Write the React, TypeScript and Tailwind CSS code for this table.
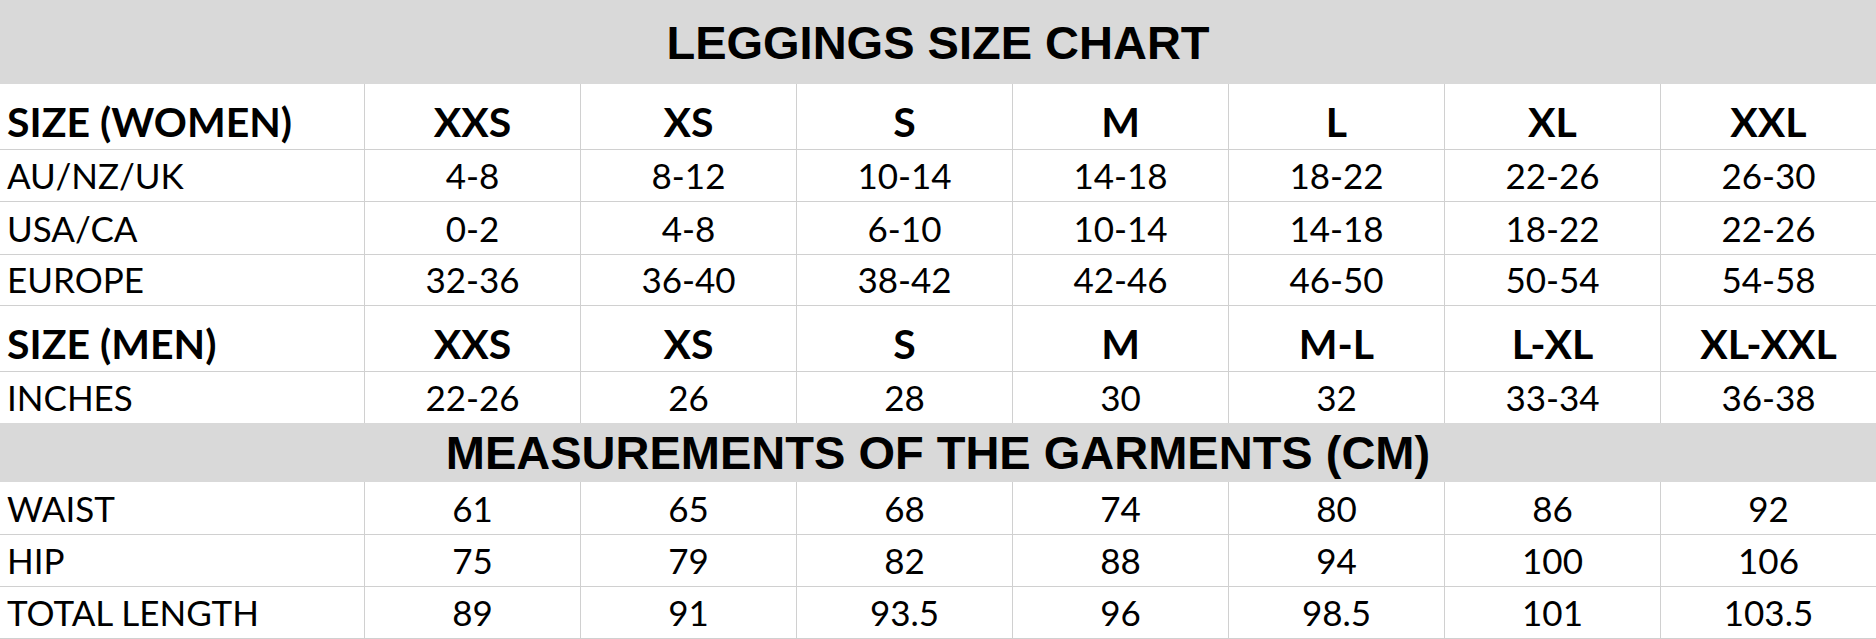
const women = [
  { label: "AU/NZ/UK", values: ["4-8", "8-12", "10-14", "14-18", "18-22", "22-26", "26-30"], h: "h-[52px]" },
  { label: "USA/CA", values: ["0-2", "4-8", "6-10", "10-14", "14-18", "18-22", "22-26"], h: "h-[53px]" },
  { label: "EUROPE", values: ["32-36", "36-40", "38-42", "42-46", "46-50", "50-54", "54-58"], h: "h-[51px]" },
];

const measurements = [
  { label: "WAIST", values: ["61", "65", "68", "74", "80", "86", "92"], h: "h-[53px]" },
  { label: "HIP", values: ["75", "79", "82", "88", "94", "100", "106"], h: "h-[52px]" },
  { label: "TOTAL LENGTH", values: ["89", "91", "93.5", "96", "98.5", "101", "103.5"], h: "h-[52px]" },
];

const Row = ({
  label,
  values,
  h,
  bold = false,
  last = false,
}: {
  label: string;
  values: string[];
  h: string;
  bold?: boolean;
  last?: boolean;
}) => {
  const text = bold ? "text-[41px] font-bold pb-[7px]" : "text-[35px] font-normal pb-[8px]";
  return (
    <div
      className={`grid grid-cols-[364px_repeat(7,1fr)] ${h} ${
        last ? "" : "border-b border-[#d0d0d0]"
      }`}
    >
      <div className={`flex items-end pl-[7px] leading-none ${text}`}>{label}</div>
      {values.map((v, i) => (
        <div
          key={i}
          className={`flex items-end justify-center border-l border-[#d0d0d0] leading-none ${text}`}
        >
          {v}
        </div>
      ))}
    </div>
  );
};

const Band = ({ title, h }: { title: string; h: string }) => (
  <div
    className={`flex ${h} items-center justify-center bg-[#d9d9d9] font-['Liberation_Sans',Arial,sans-serif] text-[47px] font-bold leading-none`}
  >
    {title}
  </div>
);

export default function App() {
  return (
    <div className="w-[1876px] h-[639px] bg-white text-black font-['Lato','Noto_Sans',sans-serif] overflow-hidden">
      <Band title="LEGGINGS SIZE CHART" h="h-[84px]" />
      <Row label="SIZE (WOMEN)" values={["XXS", "XS", "S", "M", "L", "XL", "XXL"]} h="h-[66px]" bold />
      {women.map((r) => (
        <Row key={r.label} {...r} />
      ))}
      <Row label="SIZE (MEN)" values={["XXS", "XS", "S", "M", "M-L", "L-XL", "XL-XXL"]} h="h-[66px]" bold />
      <Row label="INCHES" values={["22-26", "26", "28", "30", "32", "33-34", "36-38"]} h="h-[51px]" last />
      <Band title="MEASUREMENTS OF THE GARMENTS (CM)" h="h-[59px]" />
      {measurements.map((r) => (
        <Row key={r.label} {...r} />
      ))}
    </div>
  );
}
